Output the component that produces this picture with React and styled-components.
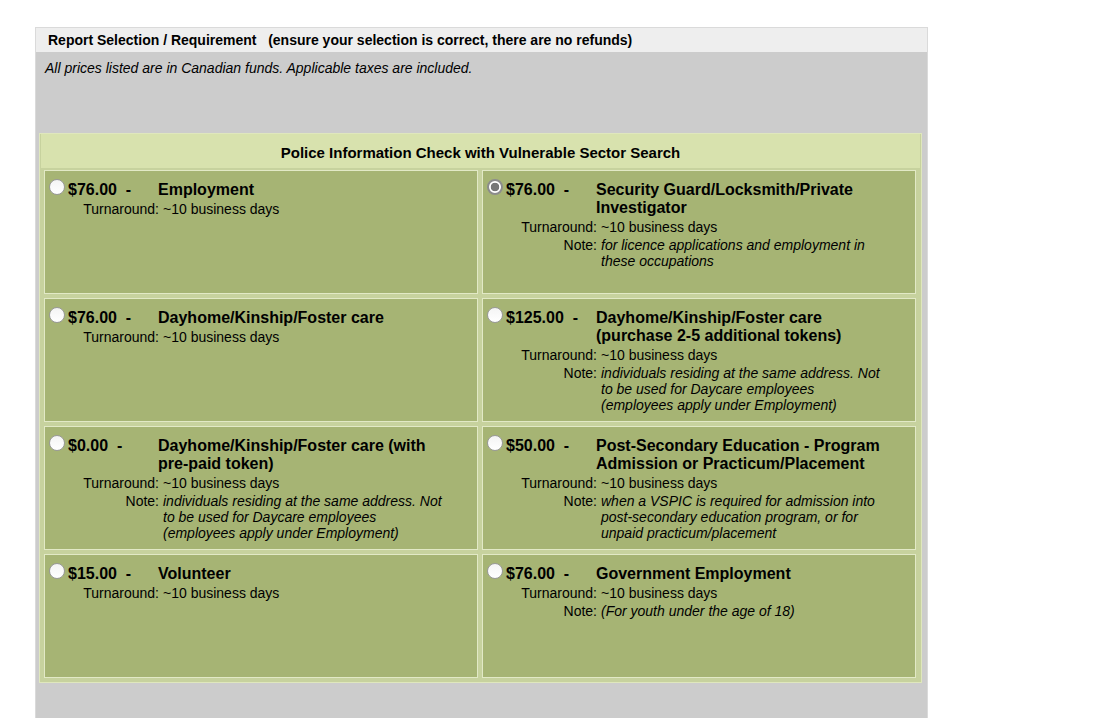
import React from 'react';
import styled, { createGlobalStyle } from 'styled-components';

const GlobalStyle = createGlobalStyle`
  *, *::before, *::after { box-sizing: border-box; }
  body {
    margin: 0;
    background: #ffffff;
    font-family: "Liberation Sans", Arial, sans-serif;
    color: #000;
  }
`;

const options = [
  { id: 1, price: '$76.00', title: 'Employment' },
  {
    id: 2,
    price: '$76.00',
    title: 'Security Guard/Locksmith/Private Investigator',
    note: ['for licence applications and employment in these occupations'],
    checked: true,
  },
  { id: 3, price: '$76.00', title: 'Dayhome/Kinship/Foster care' },
  {
    id: 4,
    price: '$125.00',
    title: 'Dayhome/Kinship/Foster care (purchase 2-5 additional tokens)',
    note: [
      'individuals residing at the same address. Not to be used for Daycare employees',
      '(employees apply under Employment)',
    ],
  },
  {
    id: 5,
    price: '$0.00',
    title: 'Dayhome/Kinship/Foster care (with pre-paid token)',
    note: [
      'individuals residing at the same address. Not to be used for Daycare employees',
      '(employees apply under Employment)',
    ],
  },
  {
    id: 6,
    price: '$50.00',
    title: 'Post-Secondary Education - Program Admission or Practicum/Placement',
    note: [
      'when a VSPIC is required for admission into post-secondary education program, or for unpaid practicum/placement',
    ],
  },
  { id: 7, price: '$15.00', title: 'Volunteer' },
  {
    id: 8,
    price: '$76.00',
    title: 'Government Employment',
    note: ['(For youth under the age of 18)'],
  },
];

const App = () => {
  return (
    <>
      <GlobalStyle />
      <Panel>
        <PanelHeader>
          Report Selection / Requirement&nbsp;&nbsp;&nbsp;(ensure your selection is correct, there are no refunds)
        </PanelHeader>
        <Notice>All prices listed are in Canadian funds. Applicable taxes are included.</Notice>
        <Table>
          <TableHeader>Police Information Check with Vulnerable Sector Search</TableHeader>
          <Options>
            {options.map(opt => (
              <Option key={opt.id}>
                <OptionGrid>
                  <PriceCell>
                    <Radio $checked={opt.checked} />
                    <Price>{opt.price}&nbsp;&nbsp;-</Price>
                  </PriceCell>
                  <Title>{opt.title}</Title>
                  <Label>Turnaround:</Label>
                  <Value>~10 business days</Value>
                  {opt.note && (
                    <>
                      <Label>Note:</Label>
                      <Value $italic>
                        {opt.note.map((line, i) => (
                          <React.Fragment key={i}>
                            {i > 0 && <br />}
                            {line}
                          </React.Fragment>
                        ))}
                      </Value>
                    </>
                  )}
                </OptionGrid>
              </Option>
            ))}
          </Options>
        </Table>
      </Panel>
    </>
  );
};

export default App;

const Panel = styled.div`
  margin: 27px 0 0 35px;
  width: 893px;
  border: 1px solid #dadada;
  background: #cccccc;
  padding-bottom: 60px;
`;

const PanelHeader = styled.div`
  height: 24px;
  line-height: 25px;
  background: #eeeeee;
  padding-left: 12px;
  font-size: 14px;
  font-weight: bold;
  white-space: nowrap;
`;

const Notice = styled.div`
  margin: 8px 0 0 9px;
  font-size: 14px;
  line-height: 16px;
  font-style: italic;
`;

const Table = styled.div`
  margin: 57px 0 0 3px;
  width: 883px;
  border: 1px solid #dfe7bd;
  background: #c7d29e;
  padding: 0 1px 1px;
`;

const TableHeader = styled.div`
  height: 34px;
  padding-top: 2px;
  display: flex;
  align-items: center;
  justify-content: center;
  background: #d8e2ae;
  font-size: 15px;
  font-weight: bold;
`;

const Options = styled.div`
  display: grid;
  grid-template-columns: 434px 434px;
  gap: 4px;
  padding: 2px 4px 3px 3px;
`;

const Option = styled.div`
  height: 124px;
  border: 1px solid #e2e9c6;
  background: #a6b474;
  padding: 10px 28px 0 4px;
`;

const OptionGrid = styled.div`
  display: grid;
  grid-template-columns: 109px 1fr;
  align-items: start;
`;

const PriceCell = styled.div`
  display: flex;
  align-items: flex-start;
  padding-bottom: 1px;
`;

const Radio = styled.span`
  flex: none;
  width: 16px;
  height: 16px;
  margin: -2px 3px 0 0;
  border-radius: 50%;
  background: ${p => (p.$checked
    ? 'radial-gradient(circle, #777777 0 4px, #ffffff 4.6px)'
    : 'linear-gradient(#f4f4f4, #ffffff)')};
  border: ${p => (p.$checked ? '2px solid #8c8c8c' : '1px solid #9a9a9a')};
`;

const Price = styled.span`
  font-size: 16px;
  line-height: 18px;
  font-weight: bold;
  white-space: nowrap;
`;

const Title = styled.div`
  font-size: 16px;
  line-height: 18px;
  font-weight: bold;
  padding-bottom: 1px;
`;

const Label = styled.div`
  text-align: right;
  font-size: 14px;
  line-height: 16px;
  padding: 1px 0;
  margin-right: -1px;
  white-space: nowrap;
`;

const Value = styled.div`
  font-size: 14px;
  line-height: 16px;
  padding: 1px 0 1px 5px;
  font-style: ${p => (p.$italic ? 'italic' : 'normal')};
`;
